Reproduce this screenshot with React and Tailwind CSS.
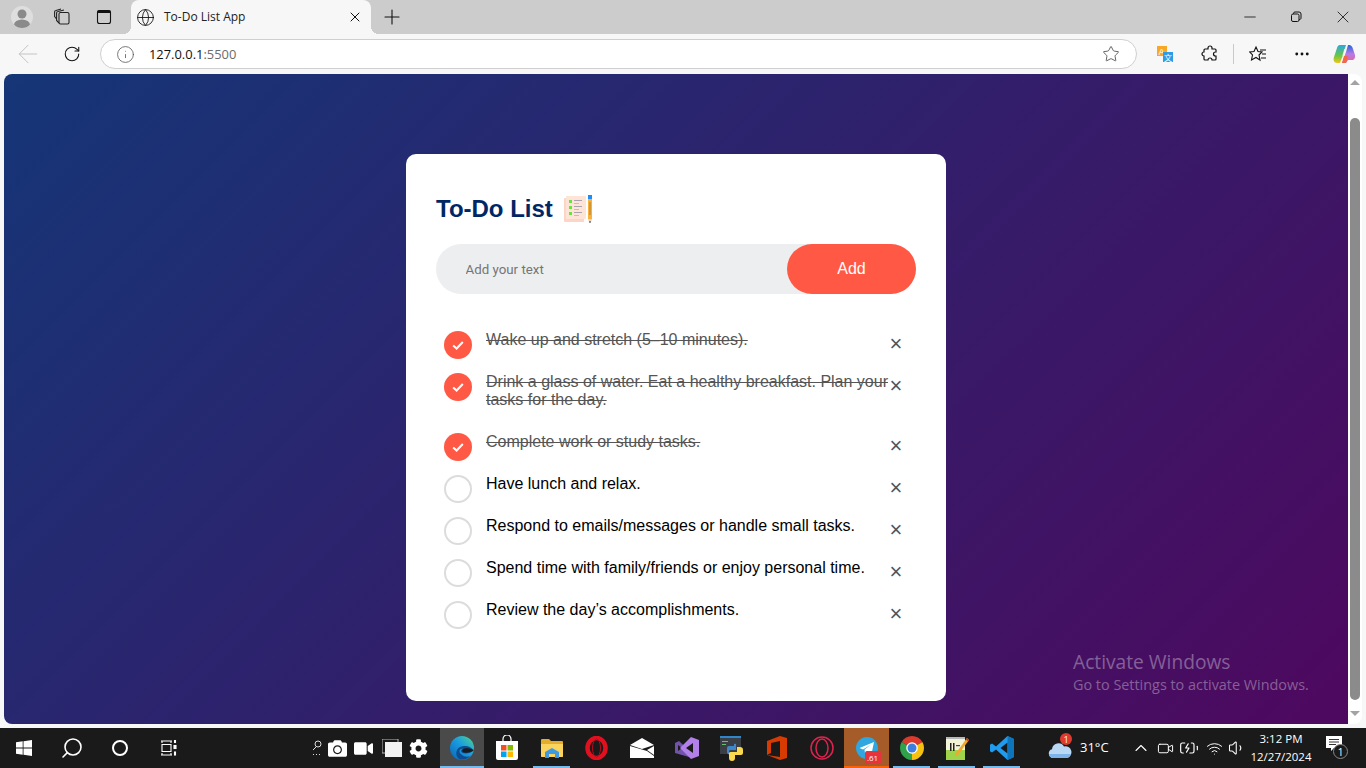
import React from "react";
import {
  ArrowLeft, BatteryCharging, ChevronUp, Globe, Info, MoreHorizontal, Plus, RotateCw,
  Search, Star, Video, Volume1, Wifi, X, Minus,
} from "lucide-react";
import { FaCamera, FaVideo, FaCog } from "react-icons/fa";

const tasks = [
  { text: "Wake up and stretch (5–10 minutes).", done: true },
  { text: "Drink a glass of water. Eat a healthy breakfast. Plan your tasks for the day.", done: true },
  { text: "Complete work or study tasks.", done: true },
  { text: "Have lunch and relax.", done: false },
  { text: "Respond to emails/messages or handle small tasks.", done: false },
  { text: "Spend time with family/friends or enjoy personal time.", done: false },
  { text: "Review the day’s accomplishments.", done: false },
];

function TodoItem({ text, done }) {
  return (
    <li className="relative flex items-start py-3 pl-2 pr-2">
      {done ? (
        <span className="-mb-2.5 flex h-7 w-7 shrink-0 items-center justify-center rounded-full bg-[#ff5945]">
          <svg width="14" height="14" viewBox="0 0 14 14" fill="none">
            <path d="M2.2 7.5 L5.6 10.5 L11.8 4" stroke="#fff" strokeWidth="2" />
          </svg>
        </span>
      ) : (
        <span className="-mb-2.5 h-7 w-7 shrink-0 rounded-full border-2 border-[#dcdcdc]" />
      )}
      <span className={`ml-[14px] text-base leading-[18px] ${done ? "text-[#555] line-through" : "text-black"}`}>
        {text}
      </span>
      <span className="absolute right-0 top-[5px] flex h-10 w-10 items-center justify-center text-[22px] leading-10 text-[#555]">
        ×
      </span>
    </li>
  );
}

function NotesIcon() {
  return (
    <svg width="30" height="30" viewBox="0 0 30 30" className="ml-[10px]">
      <rect x="1" y="4" width="20" height="24" rx="1" fill="#fdd5c6" />
      <rect x="3" y="2" width="20" height="23" rx="1" fill="#fee3d7" />
      <rect x="6" y="6" width="3" height="3" fill="#5fe83a" />
      <rect x="6" y="12" width="3" height="3" fill="#5fe83a" />
      <rect x="6" y="18" width="3" height="3" fill="#5fe83a" />
      <rect x="11" y="6" width="8" height="1" fill="#a9a3b0" />
      <rect x="11" y="9" width="5" height="1" fill="#c4bcc4" />
      <rect x="11" y="12" width="8" height="1" fill="#a9a3b0" />
      <rect x="11" y="15" width="5" height="1" fill="#c4bcc4" />
      <rect x="11" y="18" width="8" height="1" fill="#a9a3b0" />
      <rect x="11" y="21" width="5" height="1" fill="#c4bcc4" />
      <rect x="25" y="1" width="4" height="4" fill="#1e8df5" />
      <rect x="25" y="5" width="4" height="20" fill="#f8b13f" />
      <rect x="26.5" y="8" width="1" height="13" fill="#b57f22" />
      <path d="M25 25 h4 l-1 3 h-2z" fill="#e8d5c0" />
      <rect x="26.5" y="27" width="1" height="2" fill="#333" />
    </svg>
  );
}

function TitleBar() {
  return (
    <div className="flex h-[34px] shrink-0 items-center bg-[#cccccc]">
      <div className="ml-[11px] flex h-[22px] w-[22px] items-center justify-center overflow-hidden rounded-full bg-[#dedede]">
        <svg width="22" height="22" viewBox="0 0 22 22">
          <circle cx="11" cy="8" r="4.5" fill="#8a8a8a" />
          <ellipse cx="11" cy="19" rx="8" ry="5.5" fill="#8a8a8a" />
        </svg>
      </div>
      <svg width="18" height="18" viewBox="0 0 18 18" fill="none" stroke="#222" strokeWidth="1.1" className="ml-[20px]">
        <rect x="6" y="4.5" width="10" height="11.5" rx="1.5" />
        <path d="M6 15 L3.6 12.500 V5 A1.5 1.5 0 0 1 5 3.5 L11 2 M3.600 11 L1.600 8.500 V4 A1.5 1.5 0 0 1 3 2.500 L8 1" />
      </svg>
      <svg width="16" height="16" viewBox="0 0 16 16" fill="none" className="ml-[25px]">
        <rect x="1.5" y="1.5" width="13" height="13" rx="2" stroke="#111" strokeWidth="1.1" />
        <rect x="1.5" y="1.5" width="13" height="2.5" fill="#111" />
      </svg>
      <div className="relative ml-[19px] flex h-[34px] w-[240px] items-center rounded-t-lg bg-[#f7f7f7]">
        <span className="absolute -left-2 bottom-0 h-2 w-2 bg-[radial-gradient(circle_at_0_0,transparent_8px,#f7f7f7_8px)]" />
        <span className="absolute -right-2 bottom-0 h-2 w-2 bg-[radial-gradient(circle_at_100%_0,transparent_8px,#f7f7f7_8px)]" />
        <Globe size={19} strokeWidth={1.1} className="ml-[5px] text-[#111]" />
        <span className="ml-[9px] flex-1 font-['Open_Sans',sans-serif] text-xs text-[#222]">To-Do List App</span>
        <X size={16} strokeWidth={1.5} className="mr-2 text-[#111]" />
      </div>
      <Plus size={24} strokeWidth={1.1} className="ml-[9px] text-[#111]" />
      <div className="ml-auto flex items-center">
        <Minus size={18} strokeWidth={1.1} className="mr-[31px] text-[#111]" />
        <svg width="12" height="12" viewBox="0 0 12 12" fill="none" stroke="#111" className="mr-[31px]">
          <rect x="1.5" y="3" width="7.5" height="7.5" rx="1.5" />
          <path d="M3.5 3 V2.5 A1.5 1.5 0 0 1 5 1 H9 A2 2 0 0 1 11 3 V7 A1.5 1.5 0 0 1 9 8.5" />
        </svg>
        <X size={20} strokeWidth={1} className="mr-[13px] text-[#111]" />
      </div>
    </div>
  );
}

function TranslateIcon() {
  return (
    <svg width="16" height="16" viewBox="0 0 16 16">
      <rect x="0" y="0" width="10" height="10" fill="#f9a825" />
      <text x="1.5" y="8.5" fontSize="9" fontFamily="Liberation Sans" fill="#fff">A</text>
      <rect x="6" y="6" width="10" height="10" fill="#2d9ce6" />
      <text x="7" y="14.5" fontSize="8" fontFamily="Noto Sans CJK SC" fill="#fff">文</text>
    </svg>
  );
}

function CopilotIcon() {
  return (
    <svg width="22" height="22" viewBox="0 0 22 22">
      <defs>
        <linearGradient id="cpa" x1="0" y1="0" x2="0" y2="1">
          <stop offset="0" stopColor="#2aa8e0" />
          <stop offset="0.6" stopColor="#6cc644" />
          <stop offset="1" stopColor="#f5c518" />
        </linearGradient>
        <linearGradient id="cpb" x1="0" y1="0" x2="0" y2="1">
          <stop offset="0" stopColor="#2563d8" />
          <stop offset="0.5" stopColor="#b77be8" />
          <stop offset="1" stopColor="#ee5f8f" />
        </linearGradient>
      </defs>
      <path d="M7 2 H13 L10 12 L7 20 H4 C1 20 0 17 1 14 L4 5 C4.500 3 5.500 2 7 2Z" fill="url(#cpa)" />
      <path d="M9 20 L13 9 L15 2 H16 C18 2 19 3 20 6 L22 12 C22.500 15 21 17 19 17 H15 L13 20Z" fill="url(#cpb)" />
      <path d="M9 20 L11 13 H15 L13 20Z" fill="#f06a4a" />
      <path d="M10 13 L12 6" stroke="#fff" strokeWidth="1.4" opacity="0.7" />
    </svg>
  );
}

function Toolbar() {
  return (
    <div className="flex h-10 shrink-0 items-center bg-[#f7f7f7]">
      <ArrowLeft size={30} strokeWidth={0.8} className="ml-[13px] text-[#c4c4c4]" />
      <RotateCw size={18} strokeWidth={1.4} className="ml-5 text-[#111]" />
      <div className="ml-[19px] flex h-[30px] w-[1037px] items-center rounded-full border border-[#cfcfcf] bg-white">
        <Info size={19} strokeWidth={1} className="ml-[15px] text-[#555]" />
        <span className="ml-[14px] mt-px font-['Open_Sans',sans-serif] text-[12.9px] text-[#111]">
          127.0.0.1<span className="text-[#6b6b6b]">:5500</span>
        </span>
        <Star size={18} strokeWidth={1.1} className="ml-auto mr-4 text-[#444]" />
      </div>
      <div className="ml-5 flex items-center">
        <TranslateIcon />
      </div>
      <svg width="18" height="18" viewBox="0 0 18 18" fill="none" stroke="#111" strokeWidth="1.2" className="ml-[28px]">
        <path d="M7 3 A2 2 0 0 1 11 3 V4 H14 A1 1 0 0 1 15 5 V7 H14.500 A2 2 0 0 0 14.500 11 H15 V14 A1 1 0 0 1 14 15 H11 A2 2 0 0 0 7 15 H4 A1 1 0 0 1 3 14 V11 A2 2 0 0 1 3 7 V5 A1 1 0 0 1 4 4 H7Z" />
      </svg>
      <span className="ml-[14px] h-5 w-px bg-[#c9c9c9]" />
      <svg width="18" height="18" viewBox="0 0 18 18" fill="none" stroke="#111" strokeWidth="1.1" className="ml-[15px]">
        <path d="M7 2 L9 6.500 L13 7 L10 10 L11 15 L7 12.500 L2.500 15 L3.500 10 L0.800 7 L5 6.500Z" />
        <path d="M11 5 H17 M13 9 H17 M12 13 H17" />
      </svg>
      <MoreHorizontal size={18} strokeWidth={1.8} className="ml-[26px] text-[#111]" />
      <div className="ml-[22px]">
        <CopilotIcon />
      </div>
    </div>
  );
}

function Scrollbar() {
  return (
    <div className="flex w-[14px] shrink-0 flex-col items-center rounded-r-lg bg-white">
      <span className="mt-[6px] h-0 w-0 border-x-[5px] border-b-[5px] border-x-transparent border-b-[#a3a3a3]" />
      <span className="mt-[33px] h-[582px] w-[10px] rounded-full bg-[#8b8b8b]" />
      <span className="mt-[11px] h-0 w-0 border-x-[5px] border-t-[5px] border-x-transparent border-t-[#a3a3a3]" />
    </div>
  );
}

function Page() {
  return (
    <div className="relative flex-1 overflow-hidden rounded-l-lg bg-[linear-gradient(135deg,#153677,#4e085f)] font-['Liberation_Sans',sans-serif]">
      <div className="mx-auto mt-20 w-[540px] rounded-[10px] bg-white px-[30px] pb-[70px] pt-10">
        <div className="mb-5 flex h-[30px] items-center">
          <h2 className="text-2xl font-bold text-[#002765]">To-Do List</h2>
          <NotesIcon />
        </div>
        <div className="mb-[25px] flex h-[50px] items-center rounded-full bg-[#edeef0]">
          <input
            placeholder="Add your text"
            className="min-w-0 flex-1 bg-transparent pl-[29.5px] pt-[2px] font-['Roboto',sans-serif] text-[13.3px] outline-none placeholder:text-[#757575]"
          />
          <button className="h-[50px] w-[129px] rounded-full bg-[#ff5945] text-base text-white">Add</button>
        </div>
        <ul>
          {tasks.map((t) => (
            <TodoItem key={t.text} text={t.text} done={t.done} />
          ))}
        </ul>
      </div>
      <div className="absolute left-[1069px] top-[575px] font-['Open_Sans',sans-serif] text-white/35">
        <div className="text-[19.2px] leading-[26px]">Activate Windows</div>
        <div className="text-[14.4px] leading-5">Go to Settings to activate Windows.</div>
      </div>
    </div>
  );
}

function EdgeIcon() {
  return (
    <svg width="24" height="24" viewBox="0 0 24 24">
      <defs>
        <linearGradient id="edg" x1="0" y1="1" x2="1" y2="0">
          <stop offset="0" stopColor="#0b63b5" />
          <stop offset="0.55" stopColor="#1a9de0" />
          <stop offset="1" stopColor="#53d68a" />
        </linearGradient>
      </defs>
      <circle cx="12" cy="12" r="12" fill="url(#edg)" />
      <path d="M9 23 C4 19 6 10 14 10 C19 10 23 12 23 15 C21 17 16 18 13 17 C10 16 11 13 13 13 C9 12 8 17 12 19 C14 21 18 21 20 20 C17 24 12 24 9 23Z" fill="#0c4c8f" />
      <path d="M13 13 C15 12 19 12 24 14 C22 16 17 17 14 16.500 C12 16 12 14 13 13Z" fill="#1a1a1a" />
    </svg>
  );
}

function StoreIcon() {
  return (
    <svg width="24" height="26" viewBox="0 0 24 26">
      <path d="M8 7 V4 A4 4 0 0 1 16 4 V7" fill="none" stroke="#fff" strokeWidth="1.2" />
      <path d="M1 6 H23 V23 A2 2 0 0 1 21 25 H3 A2 2 0 0 1 1 23Z" fill="#fff" />
      <rect x="6" y="10" width="5.500" height="5.500" fill="#f25022" />
      <rect x="12.500" y="10" width="5.500" height="5.500" fill="#7fba00" />
      <rect x="6" y="16.500" width="5.500" height="5.500" fill="#00a4ef" />
      <rect x="12.500" y="16.500" width="5.500" height="5.500" fill="#ffb900" />
    </svg>
  );
}

function FolderIcon() {
  return (
    <svg width="22" height="20" viewBox="0 0 22 20">
      <path d="M0 2 A1 1 0 0 1 1 1 H8 L10 3 H21 A1 1 0 0 1 22 4 V18 A1 1 0 0 1 21 19 H1 A1 1 0 0 1 0 18Z" fill="#e3ad2e" />
      <path d="M0 6 H22 V18 A1 1 0 0 1 21 19 H1 A1 1 0 0 1 0 18Z" fill="#fad45d" />
      <path d="M4 14 L11 10 L18 14 V20 H14 V16 H8 V20 H4Z" fill="#3e9be0" />
    </svg>
  );
}

function OperaIcon() {
  return (
    <svg width="23" height="24" viewBox="0 0 23 24" fill="none">
      <ellipse cx="11.500" cy="12" rx="9" ry="10" stroke="#e0101f" strokeWidth="4.500" />
      <ellipse cx="11.500" cy="12" rx="4" ry="9" stroke="#b70c1c" strokeWidth="1" />
    </svg>
  );
}

function MailIcon() {
  return (
    <svg width="24" height="20" viewBox="0 0 24 20">
      <path d="M0 7 L12 0 L24 7 L12 11Z" fill="#fff" />
      <path d="M0 8 L17 13 L24 18 V20 H0Z" fill="#fff" />
      <path d="M17 12 L24 8 V17Z" fill="#fff" />
    </svg>
  );
}

function VisualStudioIcon() {
  return (
    <svg width="24" height="24" viewBox="0 0 24 24">
      <path d="M0 7 L4 5 L18 18 L14 21 L0 17Z" fill="#7252aa" />
      <path d="M3 9 V15 L7 12Z" fill="#1a1a1a" />
      <path d="M16 1 L24 4 V20 L16 23 L5 12Z" fill="#b180e8" />
      <path d="M11 12 L18 7 V17Z" fill="#1a1a1a" />
    </svg>
  );
}

function PythonIcon() {
  return (
    <svg width="24" height="26" viewBox="0 0 24 26">
      <rect x="0" y="1" width="21" height="18" fill="#3a3f45" />
      <rect x="0" y="1" width="21" height="2" fill="#2f86c8" />
      <rect x="2" y="6" width="6" height="1" fill="#6bbf6b" />
      <rect x="2" y="9" width="4" height="1" fill="#6bbf6b" />
      <path d="M7 17 V13 A2 2 0 0 1 9 11 H14 V9 A2 2 0 0 1 16 9 V15 H10 A2 2 0 0 0 9 17 V19 H8 A2 2 0 0 1 7 17Z" fill="#3f87c6" />
      <path d="M17 12 H20 A3 3 0 0 1 23 15 V18 A2 2 0 0 1 21 20 H15 V23 A3 3 0 0 1 9 23 V20 A2 2 0 0 1 11 17 H17Z" fill="#fbd94f" />
    </svg>
  );
}

function OfficeIcon() {
  return (
    <svg width="20" height="24" viewBox="0 0 20 24">
      <path d="M0 5 L13 0 L20 2 V22 L13 24 L0 19 L13 21 V5 L4 7 V17 L0 19Z" fill="#d83b01" />
    </svg>
  );
}

function OperaGxIcon() {
  return (
    <svg width="24" height="24" viewBox="0 0 24 24" fill="none" stroke="#e0234e" strokeWidth="1.500">
      <circle cx="12" cy="12" r="11" />
      <ellipse cx="12" cy="12" rx="6" ry="9" />
    </svg>
  );
}

function TelegramIcon() {
  return (
    <div className="relative h-6 w-6">
      <svg width="24" height="24" viewBox="0 0 24 24">
        <circle cx="12" cy="12" r="11" fill="#2ea6e0" />
        <path d="M4.500 12 L19 6 L16.500 18 L12 15 L10 17.500 L9.500 13.500 L16 8.500 L8 13.500Z" fill="#fff" />
      </svg>
      <span className="absolute left-[10px] top-[15px] flex h-[13px] w-[16px] items-center justify-center rounded-[2px] bg-[#e8323c] font-['Open_Sans',sans-serif] text-[8px] leading-none text-white">
        .61
      </span>
    </div>
  );
}

function ChromeIcon() {
  return (
    <svg width="24" height="24" viewBox="0 0 24 24">
      <path d="M12 12 L1.610 6 A12 12 0 0 1 22.390 6Z" fill="#dd3a2e" />
      <path d="M12 12 L22.390 6 A12 12 0 0 1 12 24Z" fill="#f6c20f" />
      <path d="M12 12 L12 24 A12 12 0 0 1 1.610 6Z" fill="#2fa24a" />
      <circle cx="12" cy="12" r="5.800" fill="#fff" />
      <circle cx="12" cy="12" r="4.500" fill="#3c7fe0" />
    </svg>
  );
}

function NotepadIcon() {
  return (
    <svg width="24" height="25" viewBox="0 0 24 25">
      <rect x="1" y="2" width="19" height="22" fill="#f4f4d8" />
      <rect x="1" y="14" width="19" height="10" fill="#9fd34a" />
      <rect x="1" y="1" width="19" height="2" fill="#b8b8b8" />
      <rect x="5" y="7" width="1.500" height="8" fill="#222" />
      <rect x="8" y="7" width="1.500" height="8" fill="#222" />
      <rect x="11" y="9" width="4" height="1.200" fill="#444" />
      <path d="M22 2 L24 4 L13 19 L10 21 L11 17Z" fill="#f0a830" />
      <path d="M22 2 L24 4 L23 5.500 L21 3.500Z" fill="#c8352b" />
    </svg>
  );
}

function VsCodeIcon() {
  return (
    <svg width="24" height="24" viewBox="0 0 24 24">
      <path d="M17.500 0 L24 3 V21 L17.500 24 L6 13.500 L2 16.500 L0 15.200 V8.800 L2 7.500 L6 10.500Z M17.500 6.500 L10.500 12 L17.500 17.500Z" fill="#1f9cf0" fillRule="evenodd" />
      <path d="M17.500 0 L24 3 V21 L17.500 24Z" fill="#0e75bd" />
    </svg>
  );
}

function WeatherIcon() {
  return (
    <div className="relative h-6 w-6">
      <svg width="24" height="24" viewBox="0 0 24 24" className="mt-[2px]">
        <path d="M5 21 A4.500 4.500 0 0 1 4 12.200 A6.500 6.500 0 0 1 16 9.500 A5.500 5.500 0 0 1 19 21Z" fill="#b9d8f5" />
        <path d="M5 21 A4.500 4.500 0 0 1 1 17 H23 A5.500 5.500 0 0 1 19 21Z" fill="#7eb4e8" />
      </svg>
      <span className="absolute left-[12px] -top-[4px] flex h-3 w-3 items-center justify-center rounded-full bg-[#e03a2e] font-['Open_Sans',sans-serif] text-[9px] leading-none text-white">
        1
      </span>
    </div>
  );
}

const apps = [
  { icon: <EdgeIcon />, state: "active" },
  { icon: <StoreIcon />, state: "" },
  { icon: <FolderIcon />, state: "open" },
  { icon: <OperaIcon />, state: "" },
  { icon: <MailIcon />, state: "" },
  { icon: <VisualStudioIcon />, state: "" },
  { icon: <PythonIcon />, state: "" },
  { icon: <OfficeIcon />, state: "" },
  { icon: <OperaGxIcon />, state: "" },
  { icon: <TelegramIcon />, state: "alert" },
  { icon: <ChromeIcon />, state: "open" },
  { icon: <NotepadIcon />, state: "open" },
  { icon: <VsCodeIcon />, state: "open" },
];

function AppCell({ icon, state }) {
  return (
    <div
      className={`relative flex h-10 shrink-0 items-center justify-center ${
        state === "active" ? "w-11 bg-[#4a4a4a]" : state === "alert" ? "w-[45px] bg-[#a65c28]" : "w-[45px]"
      }`}
    >
      {icon}
      {state === "active" && <span className="absolute inset-x-0 bottom-0 h-[2px] bg-[#76b9ed]" />}
      {state === "open" && <span className="absolute inset-x-1 bottom-0 h-[2px] bg-[#76b9ed]" />}
      {state === "alert" && <span className="absolute inset-x-0 bottom-0 h-[2px] bg-[#f7630c]" />}
    </div>
  );
}

function Taskbar() {
  return (
    <div className="flex h-10 shrink-0 items-center bg-[#1a1a1a] font-['Open_Sans',sans-serif] text-white">
      <div className="flex w-12 justify-center">
        <svg width="16" height="16" viewBox="0 0 16 16" fill="#fff">
          <path d="M0 2.300 L6.700 1.300 V7.600 H0Z M7.500 1.200 L16 0 V7.600 H7.500Z M0 8.400 H6.700 V14.700 L0 13.700Z M7.500 8.400 H16 V16 L7.500 14.800Z" />
        </svg>
      </div>
      <div className="flex w-12 justify-center">
        <Search size={24} strokeWidth={1.6} className="-scale-x-100 text-white" />
      </div>
      <div className="flex w-12 justify-center">
        <span className="h-4 w-4 rounded-full border-2 border-white" />
      </div>
      <div className="flex w-12 justify-center">
        <svg width="17" height="16" viewBox="0 0 17 16" fill="none" stroke="#fff" strokeWidth="1.100">
          <path d="M1 1 H12 M2 4.500 H11 V11.500 H2Z M1 15 H12 M2 13 V15 M11 13 V15 M2 1 V3 M11 1 V3" />
          <rect x="14.500" y="0.500" width="1" height="2" />
          <rect x="14" y="5.500" width="2" height="3" fill="#fff" />
          <rect x="14.500" y="12" width="1" height="3" />
        </svg>
      </div>
      <div className="ml-[116px] flex w-[18px] justify-center">
        <svg width="10" height="16" viewBox="0 0 10 16" fill="none" stroke="#ddd" strokeWidth="1">
          <circle cx="6" cy="4" r="3" />
          <path d="M4 7 L1 10 M1 14.500 H2 M4 14.500 H5 M7 14.500 H8" />
        </svg>
      </div>
      <div className="flex w-[22px] justify-center"><FaCamera size={19} /></div>
      <div className="flex w-[30px] justify-center"><FaVideo size={19} /></div>
      <div className="flex w-[27px] justify-center">
        <svg width="20" height="18" viewBox="0 0 20 18">
          <rect x="0" y="0" width="16" height="14" fill="none" stroke="#bbb" />
          <rect x="3" y="3" width="17" height="15" fill="#f2f2f2" />
        </svg>
      </div>
      <div className="flex w-[26px] justify-center"><FaCog size={19} /></div>
      <div className="ml-[9px] flex">
        {apps.map((a, i) => (
          <AppCell key={i} icon={a.icon} state={a.state} />
        ))}
      </div>
      <div className="ml-6"><WeatherIcon /></div>
      <span className="ml-2 w-[49px] text-[13px]">31°C</span>
      <div className="flex w-6 justify-center"><ChevronUp size={20} strokeWidth={1.3} /></div>
      <div className="flex w-6 justify-center"><Video size={17} strokeWidth={1.4} /></div>
      <div className="flex w-6 justify-center"><BatteryCharging size={20} strokeWidth={1.4} /></div>
      <div className="ml-px flex w-6 justify-center"><Wifi size={17} strokeWidth={1.4} /></div>
      <div className="flex w-[22px] justify-center"><Volume1 size={18} strokeWidth={1.4} /></div>
      <div className="flex w-[66px] flex-col items-center text-[11.5px] leading-[18px]">
        <span>3:12 PM</span>
        <span>12/27/2024</span>
      </div>
      <div className="relative ml-3 h-6 w-[20px]">
        <svg width="16" height="16" viewBox="0 0 16 16">
          <path d="M0 0 H16 V12 H8 L5 15 V12 H0Z" fill="#fff" />
          <path d="M3 3.500 H13 M3 6 H13 M3 8.500 H10" stroke="#333" />
        </svg>
        <span className="absolute left-[7px] top-[8px] flex h-[15px] w-[15px] items-center justify-center rounded-full border border-[#888] bg-[#1a1a1a] text-[10px] leading-none">
          1
        </span>
      </div>
    </div>
  );
}

export default function App() {
  return (
    <div className="flex h-screen w-full flex-col overflow-hidden bg-[#f7f7f7]">
      <TitleBar />
      <Toolbar />
      <div className="flex min-h-0 flex-1 pl-1 pr-1">
        <Page />
        <Scrollbar />
      </div>
      <div className="h-1 shrink-0" />
      <Taskbar />
    </div>
  );
}
